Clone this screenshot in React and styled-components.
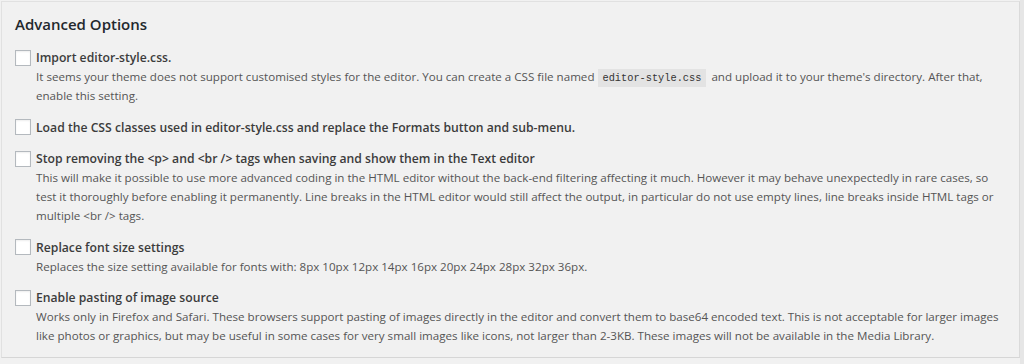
import React from "react";
import styled, { createGlobalStyle } from "styled-components";

const Global = createGlobalStyle`
  html, body { margin: 0; padding: 0; background: #f1f1f1; }
  body { font-family: "Open Sans", "Noto Sans", sans-serif; color: #444; }
`;

const Page = styled.div`
  width: 1024px;
  height: 364px;
  box-sizing: border-box;
  padding: 1px 4px 6px 1px;
  background: linear-gradient(to right, #f1f1f1 1020px, #e6e6e6 1020px);
`;

const Panel = styled.section`
  box-sizing: border-box;
  height: 357px;
  border: 1px solid #e1e1e1;
  border-right-color: #dadada;
  border-bottom-color: #d6d6d6;
  background: #f1f1f1;
  padding: 11px 14px 0 13px;
`;

const Title = styled.h2`
  margin: 0 0 13px;
  font-size: 15px;
  font-weight: 600;
  color: #23282d;
  line-height: 22px;
`;

const List = styled.div`
  display: flex;
  flex-direction: column;
  gap: 12.5px;
`;

const Option = styled.div`
  display: grid;
  grid-template-columns: 16px 1fr;
  column-gap: 5px;
`;

const Box = styled.span`
  width: 16px;
  height: 16px;
  box-sizing: border-box;
  border: 1px solid #b4b9be;
  background: #fff;
  box-shadow: inset 0 1px 2px rgba(0, 0, 0, 0.07);
  align-self: center;
`;

const Label = styled.label`
  font-size: 12.2px;
  font-weight: 600;
  line-height: 19px;
  color: #3c3c3c;
`;

const Desc = styled.p`
  grid-column: 2;
  margin: 0;
  font-size: 11.6px;
  line-height: 19px;
  color: #555;
`;

const Code = styled.code`
  font-family: "Liberation Mono", monospace;
  font-size: 10.3px;
  line-height: 10px;
  background: #e3e3e3;
  padding: 3px 5px;
  margin: 0 2px 0 0;
  color: #333;
`;

const options = [
  {
    label: "Import editor-style.css.",
    desc: (
      <>
        It seems your theme does not support customised styles for the editor. You can create a CSS file named{" "}
        <Code>editor-style.css</Code> and upload it to your theme's directory. After that, enable this setting.
      </>
    ),
  },
  { label: "Load the CSS classes used in editor-style.css and replace the Formats button and sub-menu." },
  {
    label: "Stop removing the <p> and <br /> tags when saving and show them in the Text editor",
    desc:
      "This will make it possible to use more advanced coding in the HTML editor without the back-end filtering affecting it much. However it may behave unexpectedly in rare cases, so test it thoroughly before enabling it permanently. Line breaks in the HTML editor would still affect the output, in particular do not use empty lines, line breaks inside HTML tags or multiple <br /> tags.",
  },
  {
    label: "Replace font size settings",
    desc: "Replaces the size setting available for fonts with: 8px 10px 12px 14px 16px 20px 24px 28px 32px 36px.",
  },
  {
    label: "Enable pasting of image source",
    desc:
      "Works only in Firefox and Safari. These browsers support pasting of images directly in the editor and convert them to base64 encoded text. This is not acceptable for larger images like photos or graphics, but may be useful in some cases for very small images like icons, not larger than 2-3KB. These images will not be available in the Media Library.",
  },
];

export default function App() {
  return (
    <Page>
      <Global />
      <Panel>
        <Title>Advanced Options</Title>
        <List>
          {options.map((o, i) => (
            <Option key={i}>
              <Box />
              <Label>{o.label}</Label>
              {o.desc && <Desc>{o.desc}</Desc>}
            </Option>
          ))}
        </List>
      </Panel>
    </Page>
  );
}
